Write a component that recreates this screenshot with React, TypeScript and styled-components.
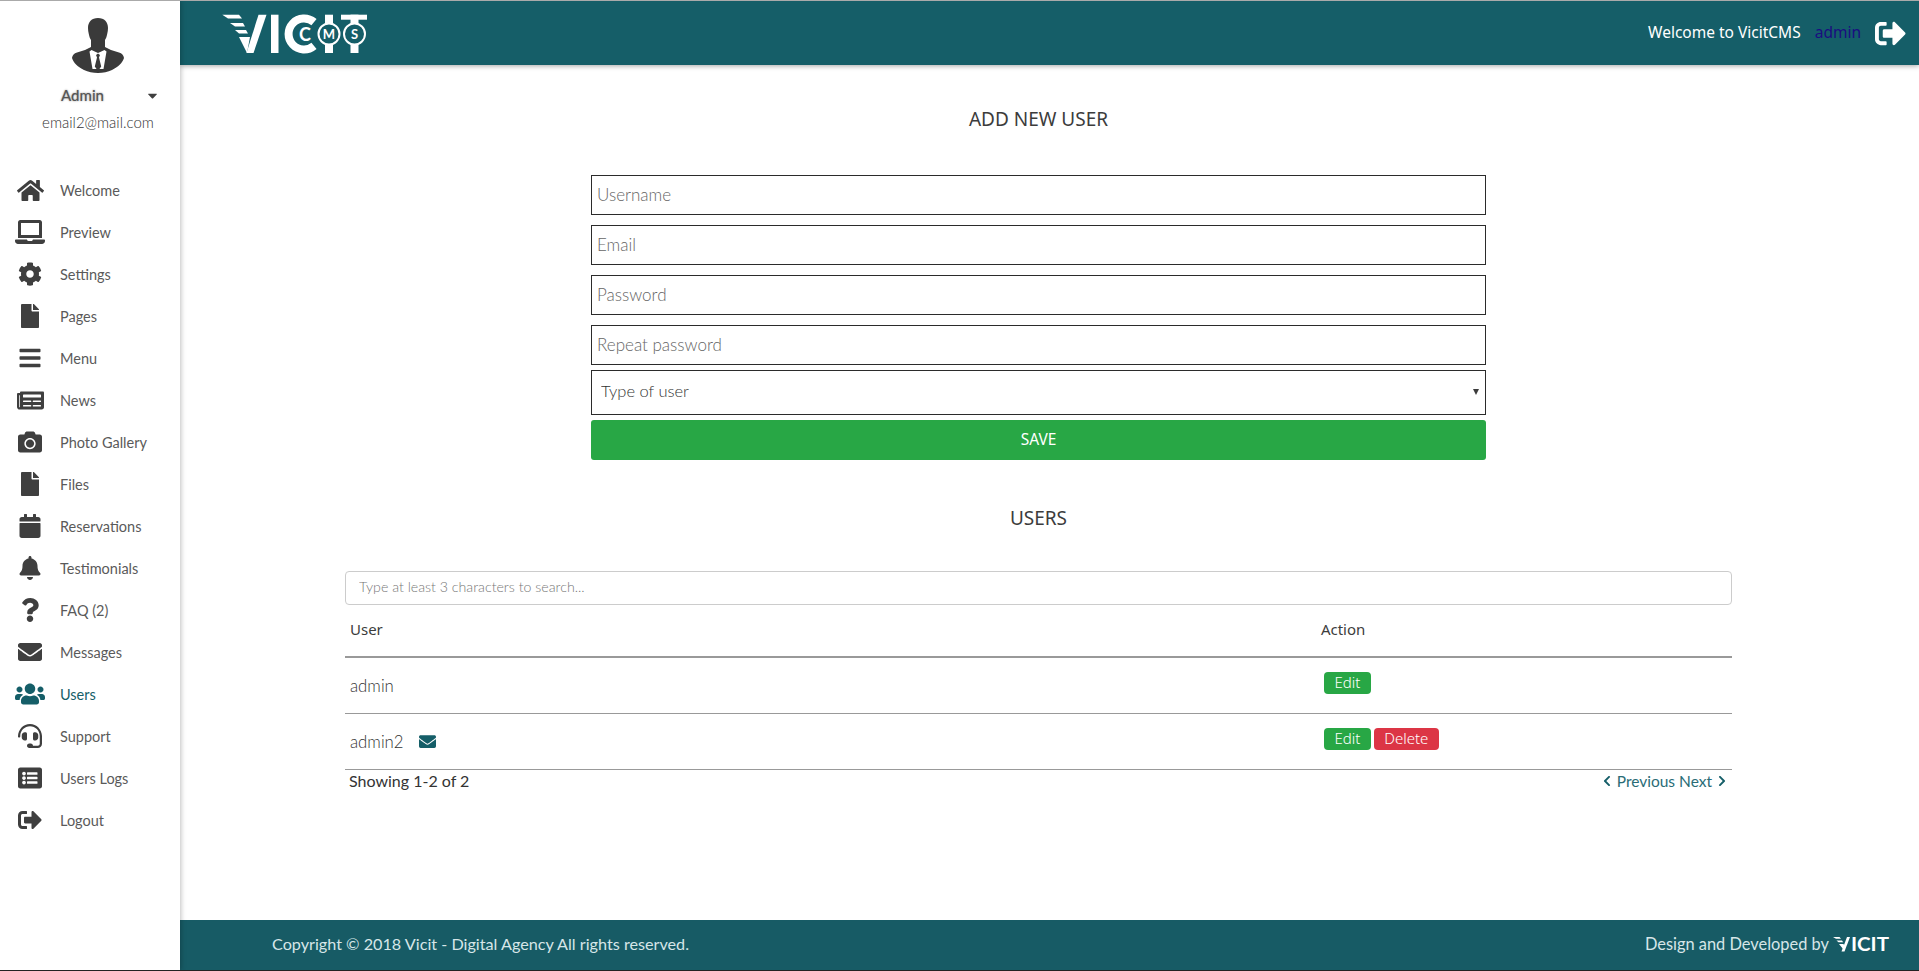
import { createGlobalStyle, styled } from "styled-components";
import {
  FaBars,
  FaBell,
  FaCalendar,
  FaCamera,
  FaCaretDown,
  FaChevronLeft,
  FaChevronRight,
  FaCog,
  FaEnvelope,
  FaFile,
  FaHeadset,
  FaHome,
  FaLaptop,
  FaListAlt,
  FaNewspaper,
  FaQuestion,
  FaSignOutAlt,
  FaUsers,
} from "react-icons/fa";

const teal = "#155e68";
const bodyFont = `"Lato", "Noto Sans", sans-serif`;
const titleFont = `"Noto Sans", "Open Sans", sans-serif`;

const GlobalStyle = createGlobalStyle`
  html, body {
    margin: 0;
    padding: 0;
    background: #fff;
  }
  * {
    box-sizing: border-box;
  }
`;

const Page = styled.div`
  display: flex;
  height: 971px;
  border-top: 1px solid #aaa;
  border-bottom: 1px solid #222;
  font-family: ${bodyFont};
  color: #444;
  overflow: hidden;
`;

const Sidebar = styled.aside`
  flex: 0 0 180px;
  display: flex;
  flex-direction: column;
  background: #fff;
  box-shadow: 1px 0 5px rgba(0, 0, 0, 0.25);
  position: relative;
  z-index: 2;
`;

const Profile = styled.div`
  height: 168px;
  padding-top: 12px;
  display: flex;
  flex-direction: column;
  align-items: center;
`;

const AvatarSvg = styled.svg`
  display: block;
  width: 60px;
  height: 64px;
  margin-left: 16px;
`;

const ProfileName = styled.div`
  width: 100%;
  margin-top: 8px;
  height: 20px;
  padding: 0 20px 0 61px;
  display: flex;
  justify-content: space-between;
  align-items: center;
  font-size: 15px;
  font-weight: 500;
  color: #555;
  text-shadow: 0 0 2px rgba(0, 0, 0, 0.45);

  svg {
    font-size: 15px;
    color: #3f3f3f;
  }
`;

const ProfileMail = styled.div`
  margin: 8px 0 0 16px;
  font-size: 15px;
  font-weight: 300;
  color: #333;
`;

const Nav = styled.nav`
  display: flex;
  flex-direction: column;
`;

const NavItem = styled.a<{ $active?: boolean }>`
  height: 42px;
  display: flex;
  align-items: center;
  font-size: 14.5px;
  font-weight: 400;
  color: ${(p) => (p.$active ? teal : "#5a5a5a")};

  svg {
    color: ${(p) => (p.$active ? teal : "#3f3f3f")};
  }
`;

const NavIcon = styled.span`
  flex: 0 0 60px;
  display: flex;
  justify-content: center;
  font-size: 26px;
  line-height: 0;
`;

const Main = styled.div`
  flex: 1;
  min-width: 0;
  display: flex;
  flex-direction: column;
`;

const Header = styled.header`
  flex: 0 0 64px;
  display: flex;
  align-items: center;
  justify-content: space-between;
  padding: 0 13px 0 42px;
  background: ${teal};
  box-shadow: 0 1px 5px rgba(0, 0, 0, 0.35);
  position: relative;
  z-index: 1;
`;

const LogoSvg = styled.svg`
  display: block;
  width: 170px;
  height: 54px;
  margin: 4px 0 0 -12px;
`;

const HeaderRight = styled.div`
  display: flex;
  align-items: center;
  font-family: ${titleFont};
`;

const Welcome = styled.span`
  font-size: 15.5px;
  color: #fff;
  margin-bottom: 2px;
`;

const AdminLink = styled.a`
  margin: 0 0 2px 14px;
  font-size: 15.5px;
  color: #1a0d80;
`;

const LogoutBtn = styled.span`
  margin-left: 14px;
  display: flex;
  color: #fff;
  font-size: 31px;
`;

const Content = styled.main`
  flex: 1;
  padding: 0 22px 0 0;
  display: flex;
  flex-direction: column;
  align-items: center;
`;

const Title = styled.h2<{ $top: number; $bottom: number }>`
  margin: ${(p) => p.$top}px 0 ${(p) => p.$bottom}px;
  height: 24px;
  line-height: 24px;
  font-family: ${titleFont};
  font-size: 19px;
  font-weight: 400;
  color: #3c3c3c;
`;

const Form = styled.form`
  width: 895px;
  display: flex;
  flex-direction: column;
`;

const TextInput = styled.input`
  height: 40px;
  margin-bottom: 10px;
  padding: 0 5px 2px;
  border: 1px solid #2b2b2b;
  border-radius: 0;
  outline: none;
  font-family: ${bodyFont};
  font-size: 17px;
  font-weight: 300;
  color: #444;

  &::placeholder {
    color: #666;
    opacity: 1;
  }
`;

const SelectWrap = styled.div`
  position: relative;
  margin: -5px 0 5px;
`;

const Select = styled.select`
  display: block;
  width: 100%;
  height: 45px;
  padding: 0 9px 3px;
  appearance: none;
  background: #fff;
  border: 1px solid #2b2b2b;
  border-radius: 0;
  font-family: ${bodyFont};
  font-size: 16.5px;
  font-weight: 300;
  color: #333;
`;

const SelectArrow = styled.span`
  position: absolute;
  right: 7px;
  top: 19px;
  width: 0;
  height: 0;
  border-left: 3px solid transparent;
  border-right: 3px solid transparent;
  border-top: 6px solid #3c3c3c;
`;

const SaveButton = styled.button`
  height: 40px;
  padding: 0 0 3px;
  border: 0;
  border-radius: 3px;
  background: #28a745;
  color: #fff;
  font-family: ${titleFont};
  font-size: 15.5px;
`;

const Users = styled.section`
  width: 1387px;
`;

const Search = styled.input`
  display: block;
  width: 100%;
  height: 34px;
  padding: 0 13px 3px;
  border: 1px solid #ccc;
  border-radius: 4px;
  outline: none;
  font-family: ${bodyFont};
  font-size: 14.2px;
  font-weight: 300;

  &::placeholder {
    color: #777;
    opacity: 1;
  }
`;

const Table = styled.table`
  width: 100%;
  table-layout: fixed;
  border-collapse: collapse;
`;

const HeadCell = styled.th<{ $width: string }>`
  width: ${(p) => p.$width};
  height: 52px;
  padding: 0 5px 4px;
  text-align: left;
  border-bottom: 2px solid #999;
  font-family: ${titleFont};
  font-size: 15px;
  font-weight: 400;
  color: #3c3c3c;
`;

const Cell = styled.td`
  height: 56px;
  padding: 0 5px;
  border-bottom: 1px solid #999;
  font-size: 16.8px;
  font-weight: 300;
  color: #333;

  & > svg {
    margin-left: 15px;
    font-size: 17px;
    color: ${teal};
    vertical-align: -2px;
  }
`;

const Actions = styled.div`
  display: flex;
  gap: 3px;
  padding-left: 3px;
  padding-bottom: 4px;
`;

const Badge = styled.a<{ $danger?: boolean }>`
  height: 22px;
  line-height: 21px;
  padding: 0 10.5px;
  border-radius: 4px;
  background: ${(p) => (p.$danger ? "#dc3545" : "#28a745")};
  color: #fff;
  font-family: ${titleFont};
  font-size: 15px;
`;

const TableFoot = styled.div`
  display: flex;
  justify-content: space-between;
  padding: 1px 4px 0 4px;
  font-size: 16px;
  font-weight: 400;
  color: #333;
  line-height: 20px;
`;

const Pager = styled.div`
  display: flex;
  align-items: center;
  gap: 4px;
  font-size: 15.5px;
  color: #2a6c76;

  svg {
    font-size: 12px;
    color: ${teal};
  }
`;

const Footer = styled.footer`
  flex: 0 0 50px;
  display: flex;
  align-items: center;
  justify-content: space-between;
  padding: 0 29px 3px 92px;
  background: #175b65;
  color: #d6e6e8;
  font-family: ${bodyFont};
  font-size: 16.2px;
  font-weight: 400;
`;

const FooterBrand = styled.div`
  display: flex;
  align-items: center;
  gap: 4px;
  font-size: 16.4px;
`;

const FooterLogo = styled.svg`
  display: block;
  width: 57px;
  height: 24px;
  overflow: visible;
`;

function Avatar() {
  return (
    <AvatarSvg viewBox="18 8 60 64" aria-hidden="true">
      <path
        fill="#3a3a3a"
        d="M48 13c6.5 0 10 4 10 10 0 2-.3 4-.8 6-.5 2.500-1.200 4.500-2.200 6v7l6 3 8 2.500c3 1 4.500 2.500 5 5.500-1.500 5-6 9-12 12-4 2-9 3-14 3s-10-1-14-3c-6-3-10.500-7-12-12 .5-3 2-4.500 5-5.500l8-2.500 6-3v-7c-1-1.500-1.700-3.500-2.200-6-.5-2-.8-4-.8-6 0-6 3.500-10 10-10z"
      />
      <path fill="#fff" d="M41.500 45l6.500 3 6.500-3 2 1.500-3 17.500h-11l-3-17.500z" />
      <path fill="#3a3a3a" d="M46 50l2-1.500 2 1.500-1 2.500 2.200 9L48 66l-3.200-4.500 2.200-9z" />
    </AvatarSvg>
  );
}

function HeaderLogo() {
  return (
    <LogoSvg viewBox="0 0 170 54" aria-label="Vicit CMS">
      <g fill="#fff">
        <path d="M12.300 6.700H29l3 3.800H18z" />
        <path d="M20 15h13l2 3.500H25z" />
        <path d="M25 22h11l2 3.500h-9z" />
        <path d="M29 29h11l-3 16z" />
        <path d="M48.500 6.700h8L43.500 45h-7z" />
        <rect x="61" y="6.700" width="7.500" height="38.300" />
        <rect x="115" y="6.700" width="8" height="38.300" />
        <rect x="131" y="6.700" width="26" height="5" />
        <rect x="140.500" y="6.700" width="8" height="38.300" />
      </g>
      <path d="M104 14.100A15.500 15.500 0 1 0 104 37.900" fill="none" stroke="#fff" strokeWidth="8" />
      <g fill={teal} stroke="#fff" strokeWidth="2">
        <circle cx="119" cy="26" r="10.500" />
        <circle cx="144.500" cy="26" r="10.500" />
      </g>
      <g fill="#fff" fontFamily="Lato, sans-serif" fontWeight="700" textAnchor="middle">
        <text x="95" y="32.500" fontSize="18">C</text>
        <text x="119" y="30.800" fontSize="13">M</text>
        <text x="144.500" y="30.800" fontSize="13">S</text>
      </g>
    </LogoSvg>
  );
}

function BrandMark() {
  return (
    <FooterLogo viewBox="0 -3 57 24" aria-label="Vicit">
      <g fill="#fff">
        <path d="M0 2h6.500l1.500 1.800H3z" />
        <path d="M3.500 5.500h5.500l1.200 1.800H5.500z" />
        <path d="M6 9h4.500l1.300 2.500-1.300 3z" />
        <path d="M14 2h3l-5.500 14.500h-3z" />
      </g>
      <text
        x="18"
        y="16"
        fontFamily="Lato, sans-serif"
        fontWeight="700"
        fontSize="18"
        fill="#fff"
        textLength="38"
        lengthAdjust="spacingAndGlyphs"
      >
        ICIT
      </text>
    </FooterLogo>
  );
}

const navItems = [
  { label: "Welcome", icon: <FaHome size={27} /> },
  { label: "Preview", icon: <FaLaptop size={30} /> },
  { label: "Settings", icon: <FaCog size={24} /> },
  { label: "Pages", icon: <FaFile size={24} /> },
  { label: "Menu", icon: <FaBars size={24} /> },
  { label: "News", icon: <FaNewspaper size={27} /> },
  { label: "Photo Gallery", icon: <FaCamera size={24} /> },
  { label: "Files", icon: <FaFile size={24} /> },
  { label: "Reservations", icon: <FaCalendar size={24} /> },
  { label: "Testimonials", icon: <FaBell size={24} /> },
  { label: "FAQ (2)", icon: <FaQuestion size={24} /> },
  { label: "Messages", icon: <FaEnvelope size={24} /> },
  { label: "Users", icon: <FaUsers size={30} />, active: true },
  { label: "Support", icon: <FaHeadset size={24} /> },
  { label: "Users Logs", icon: <FaListAlt size={24} /> },
  { label: "Logout", icon: <FaSignOutAlt size={24} /> },
];

export default function App() {
  return (
    <>
      <GlobalStyle />
      <Page>
        <Sidebar>
          <Profile>
            <Avatar />
            <ProfileName>
              Admin
              <FaCaretDown />
            </ProfileName>
            <ProfileMail>email2@mail.com</ProfileMail>
          </Profile>
          <Nav>
            {navItems.map((item) => (
              <NavItem key={item.label} $active={item.active}>
                <NavIcon>{item.icon}</NavIcon>
                {item.label}
              </NavItem>
            ))}
          </Nav>
        </Sidebar>
        <Main>
          <Header>
            <HeaderLogo />
            <HeaderRight>
              <Welcome>Welcome to VicitCMS</Welcome>
              <AdminLink>admin</AdminLink>
              <LogoutBtn>
                <FaSignOutAlt />
              </LogoutBtn>
            </HeaderRight>
          </Header>
          <Content>
            <Title $top={42} $bottom={44}>ADD NEW USER</Title>
            <Form>
              <TextInput placeholder="Username" />
              <TextInput placeholder="Email" />
              <TextInput placeholder="Password" />
              <TextInput placeholder="Repeat password" />
              <SelectWrap>
                <Select defaultValue="">
                  <option value="">Type of user</option>
                </Select>
                <SelectArrow />
              </SelectWrap>
              <SaveButton type="button">SAVE</SaveButton>
            </Form>
            <Title $top={46} $bottom={41}>USERS</Title>
            <Users>
              <Search placeholder="Type at least 3 characters to search..." />
              <Table>
                <thead>
                  <tr>
                    <HeadCell $width="70%">User</HeadCell>
                    <HeadCell $width="30%">Action</HeadCell>
                  </tr>
                </thead>
                <tbody>
                  <tr>
                    <Cell>admin</Cell>
                    <Cell>
                      <Actions>
                        <Badge>Edit</Badge>
                      </Actions>
                    </Cell>
                  </tr>
                  <tr>
                    <Cell>
                      admin2
                      <FaEnvelope />
                    </Cell>
                    <Cell>
                      <Actions>
                        <Badge>Edit</Badge>
                        <Badge $danger>Delete</Badge>
                      </Actions>
                    </Cell>
                  </tr>
                </tbody>
              </Table>
              <TableFoot>
                <span>Showing 1-2 of 2</span>
                <Pager>
                  <FaChevronLeft />
                  Previous Next
                  <FaChevronRight />
                </Pager>
              </TableFoot>
            </Users>
          </Content>
          <Footer>
            <span>Copyright © 2018 Vicit - Digital Agency All rights reserved.</span>
            <FooterBrand>
              Design and Developed by
              <BrandMark />
            </FooterBrand>
          </Footer>
        </Main>
      </Page>
    </>
  );
}
